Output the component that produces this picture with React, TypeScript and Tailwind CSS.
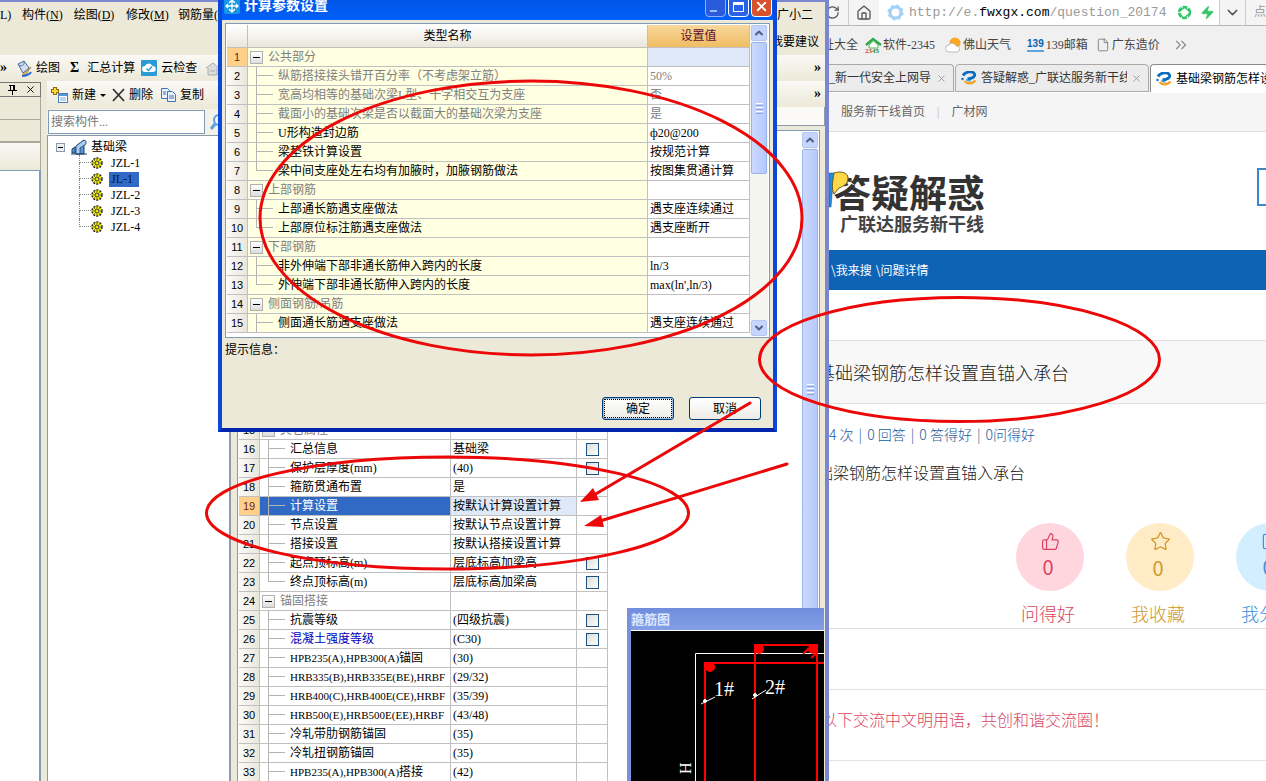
import { useState } from "react";
import { ChevronDown, ChevronUp, ChevronsRight, File, House, RotateCw, SquareArrowOutUpRight, Star, ThumbsUp, X, Zap } from "lucide-react";
import clsx from "clsx";

type Row = {
  no: number;
  name: string;
  code?: string;
  value?: string;
  kind: "group" | "item" | "last";
  muted?: boolean;
  check?: boolean;
  blue?: boolean;
};

const params: Row[] = [
  { no: 1, name: "公共部分", kind: "group" },
  { no: 2, name: "纵筋搭接接头错开百分率（不考虑架立筋）", value: "50%", kind: "item", muted: true },
  { no: 3, name: "宽高均相等的基础次梁L型、十字相交互为支座", value: "否", kind: "item", muted: true },
  { no: 4, name: "截面小的基础次梁是否以截面大的基础次梁为支座", value: "是", kind: "item", muted: true },
  { no: 5, name: "U形构造封边筋", value: "ф20@200", kind: "item" },
  { no: 6, name: "梁垫铁计算设置", value: "按规范计算", kind: "item" },
  { no: 7, name: "梁中间支座处左右均有加腋时，加腋钢筋做法", value: "按图集贯通计算", kind: "last" },
  { no: 8, name: "上部钢筋", kind: "group" },
  { no: 9, name: "上部通长筋遇支座做法", value: "遇支座连续通过", kind: "item" },
  { no: 10, name: "上部原位标注筋遇支座做法", value: "遇支座断开", kind: "last" },
  { no: 11, name: "下部钢筋", kind: "group" },
  { no: 12, name: "非外伸端下部非通长筋伸入跨内的长度", value: "ln/3", kind: "item" },
  { no: 13, name: "外伸端下部非通长筋伸入跨内的长度", value: "max(ln',ln/3)", kind: "last" },
  { no: 14, name: "侧面钢筋/吊筋", kind: "group" },
  { no: 15, name: "侧面通长筋遇支座做法", value: "遇支座连续通过", kind: "item" },
];

const props: Row[] = [
  { no: 15, name: "其它属性", kind: "group" },
  { no: 16, name: "汇总信息", value: "基础梁", kind: "item", check: true },
  { no: 17, name: "保护层厚度(mm)", value: "(40)", kind: "item", check: true },
  { no: 18, name: "箍筋贯通布置", value: "是", kind: "item" },
  { no: 19, name: "计算设置", value: "按默认计算设置计算", kind: "item" },
  { no: 20, name: "节点设置", value: "按默认节点设置计算", kind: "item" },
  { no: 21, name: "搭接设置", value: "按默认搭接设置计算", kind: "item" },
  { no: 22, name: "起点顶标高(m)", value: "层底标高加梁高", kind: "item", check: true },
  { no: 23, name: "终点顶标高(m)", value: "层底标高加梁高", kind: "last", check: true },
  { no: 24, name: "锚固搭接", kind: "group" },
  { no: 25, name: "抗震等级", value: "(四级抗震)", kind: "item", check: true },
  { no: 26, name: "混凝土强度等级", value: "(C30)", kind: "item", check: true, blue: true },
  { no: 27, code: "HPB235(A),HPB300(A)", name: "锚固", value: "(30)", kind: "item" },
  { no: 28, code: "HRB335(B),HRB335E(BE),HRBF", name: "", value: "(29/32)", kind: "item" },
  { no: 29, code: "HRB400(C),HRB400E(CE),HRBF", name: "", value: "(35/39)", kind: "item" },
  { no: 30, code: "HRB500(E),HRB500E(EE),HRBF", name: "", value: "(43/48)", kind: "item" },
  { no: 31, name: "冷轧带肋钢筋锚固", value: "(35)", kind: "item" },
  { no: 32, name: "冷轧扭钢筋锚固", value: "(35)", kind: "item" },
  { no: 33, code: "HPB235(A),HPB300(A)", name: "搭接", value: "(42)", kind: "item" },
];

const members = ["JZL-1", "JL-1", "JZL-2", "JZL-3", "JZL-4"];

function NameCell({ row }: { row: Row }) {
  if (row.kind === "group") {
    return (
      <div className="flex h-[18px] items-center overflow-hidden whitespace-nowrap text-[#808080]">
        <button aria-label={row.name} className="ml-0.5 mr-[5px] flex size-[13px] shrink-0 items-center justify-center border border-[#b0b0b0] bg-gradient-to-b from-white to-[#ddd]">
          <span className="h-px w-[7px] bg-black" />
        </button>
        {row.name}
      </div>
    );
  }
  return (
    <div className={clsx("flex h-[18px] items-center overflow-hidden whitespace-nowrap", row.muted && "text-[#808080]", row.blue && "text-[#0000c0]")}>
      <span className="-mt-px ml-2 mr-[5px] flex h-[19px] w-[17px] shrink-0 flex-col">
        <span className="h-[10px] border-b border-l border-[#b4b4b4]" />
        <span className={clsx("h-[9px]", row.kind === "item" && "border-l border-[#b4b4b4]")} />
      </span>
      {row.code && <span className="text-[11px]">{row.code}</span>}
      {row.name}
    </div>
  );
}

function NumCell({ no, active }: { no: number; active: boolean }) {
  return (
    <td
      className={clsx(
        "h-[19px] border-b border-r border-[#c0c0c0] p-0 text-center font-['Liberation_Sans',sans-serif] text-[11px] leading-4",
        active ? "bg-[#ffd08a] text-[#702010]" : "bg-gradient-to-r from-[#fbfaf6] to-[#e9e7dc]"
      )}
    >
      {no}
    </td>
  );
}

function ScrollButton({ down }: { down?: boolean }) {
  return (
    <button aria-label={down ? "向下" : "向上"} className="flex h-4 w-full shrink-0 items-center justify-center rounded-xs border border-[#b4c8f0] bg-[#c6d5fd] text-[#4d6185]">
      {down ? <ChevronDown size={12} strokeWidth={4} /> : <ChevronUp size={12} strokeWidth={4} />}
    </button>
  );
}

function Thumb({ className }: { className: string }) {
  return (
    <div className={clsx("flex flex-col items-center justify-center gap-px rounded-xs border border-[#98b4ec] bg-gradient-to-r from-[#cbd9ff] to-[#b6c9fb]", className)}>
      <span className="h-px w-[7px] bg-white" />
      <span className="h-px w-[7px] bg-[#8ca7e0]" />
      <span className="h-px w-[7px] bg-white" />
      <span className="h-px w-[7px] bg-[#8ca7e0]" />
      <span className="h-px w-[7px] bg-white" />
      <span className="h-px w-[7px] bg-[#8ca7e0]" />
    </div>
  );
}

function Gear() {
  return (
    <svg width="12" height="12" viewBox="0 0 12 12">
      <circle cx="6" cy="6" r="5" fill="#f4ee00" stroke="#222" strokeWidth="1.4" strokeDasharray="2 1.2" />
      <path d="M6 2v8M2 6h8M3.2 3.2l5.6 5.6M8.8 3.2L3.2 8.8" stroke="#444" strokeWidth=".8" />
      <circle cx="6" cy="6" r="1.6" fill="#ff3" stroke="#333" strokeWidth=".7" />
    </svg>
  );
}

function Swirl() {
  return (
    <svg width="16" height="14" viewBox="0 0 16 14" className="shrink-0" fill="none">
      <path d="M2 4.500C4 .5 12-.5 13.500 3c1 2.500-2 4.500-7 5" stroke="#0b6cc0" strokeWidth="2.800" />
      <path d="M3.500 10c3 3.500 8 3 11-.5" stroke="#f5a21d" strokeWidth="2.200" />
      <path d="M6 8c-1 1 1 2 4 2" stroke="#2f9be0" strokeWidth="1.200" />
      <circle cx="1.500" cy="8" r="1.200" fill="#0b6cc0" />
    </svg>
  );
}

function MemberPanel() {
  const [selected, setSelected] = useState("JL-1");
  return (
    <section className="flex w-[182px] shrink-0 flex-col">
      <div className="flex h-[28px] items-center bg-gradient-to-b from-[#faf9f5] to-[#ece9d8] pl-1">
        <button className="flex items-center gap-1">
          <svg width="17" height="16" viewBox="0 0 17 16">
            <path d="M4 0v8M0 4h8" stroke="#8a6a00" strokeWidth="4" />
            <path d="M4 1v6M1 4h6" stroke="#ffd83a" strokeWidth="2.200" />
            <rect x="7.500" y="6.500" width="9" height="9" fill="#fff" stroke="#4a7cc0" />
            <rect x="8" y="7" width="8" height="2" fill="#5c94dc" />
            <path d="M9 11h6M9 13h6" stroke="#7ba6dc" />
          </svg>
          新建
          <span className="border-x-3 border-t-3 border-x-transparent border-t-black" />
        </button>
        <button className="ml-1.5 flex items-center gap-1">
          <svg width="13" height="14" viewBox="0 0 13 14" fill="none" stroke="#333" strokeWidth="1.800">
            <path d="M1 1l11 12M12 1L1 13" />
          </svg>
          删除
        </button>
        <button className="ml-2 flex items-center gap-1">
          <svg width="15" height="14" viewBox="0 0 15 14" fill="#e8f1fc" stroke="#3e74b8">
            <path d="M.5.5h6l2 2v8h-8z" />
            <path d="M6.500 3.500h5l3 3v7h-8z" />
            <path d="M2 4h3M2 6h3M8 8h5M8 10h5" />
          </svg>
          复制
        </button>
      </div>
      <div className="flex h-[27px] items-center border-b border-[#8a98a8] bg-[#f3f1e8] pl-px">
        <input aria-label="搜索构件" placeholder="搜索构件..." className="h-6 w-[157px] border border-[#7f9db9] bg-white px-0.5 text-xs outline-none placeholder:text-[#777]" />
        <svg width="14" height="18" viewBox="0 0 14 18" fill="none" stroke="#5aa0e0" strokeWidth="2" className="ml-1">
          <circle cx="10" cy="7" r="5" />
          <path d="M6 11l-4 5" strokeWidth="3" />
        </svg>
      </div>
      <div className="flex-1 border-l border-[#8a98a8] bg-white pt-[3px]">
        <div className="flex h-4 items-center pl-2">
          <button aria-label="收起" className="flex size-[9px] items-center justify-center border border-[#8a9bb0] bg-[#eee]">
            <span className="h-px w-[5px] bg-black" />
          </button>
          <svg width="16" height="16" viewBox="0 0 16 16" className="ml-1.5 mr-1">
            <path d="M1 10l3-2v6H1zM5 7l8-6v14H5z" fill="#5f95cf" stroke="#1b416e" />
            <path d="M5 7l8-6 2 1v3L9 9v6H5z" fill="#a7cdf2" stroke="#1b416e" strokeWidth=".8" />
            <path d="M0 15h16" stroke="#1b416e" />
          </svg>
          <span>基础梁</span>
        </div>
        {members.map((m) => (
          <div key={m} className="flex h-4 items-center pl-[31px]">
            <span className={clsx("flex w-3 flex-col", m === "JZL-4" ? "mb-2 h-2" : "h-4")}>
              <span className="h-2 border-b border-l border-dotted border-[#888]" />
              {m !== "JZL-4" && <span className="h-2 border-l border-dotted border-[#888]" />}
            </span>
            <Gear />
            <button onClick={() => setSelected(m)} className={clsx("ml-1.5 h-[15px] px-0.5 leading-[15px]", selected === m && "bg-[#316ac5] pr-1.5 text-[#071540]")}>
              {m}
            </button>
          </div>
        ))}
      </div>
    </section>
  );
}

function PropertyPanel() {
  return (
    <section className="flex min-w-0 flex-1 flex-col border-l-2 border-[#8d9aa8] bg-[#ece9d8]">
      <div className="flex h-[26px] shrink-0 items-center justify-end bg-gradient-to-b from-[#faf9f5] to-[#ece9d8] pr-1">
        <span className="text-sm font-bold">»</span>
      </div>
      <div className="mb-1 h-[19px] shrink-0 border-b border-r border-[#8d9aa8] bg-[#fbfaf7]" />
      <div className="ml-[6px] mr-[5px] flex min-h-0 flex-1 justify-between border border-b-0 border-[#7f9db9] bg-white pl-px pr-px pt-px">
        <table className="w-[369px] table-fixed self-start border-separate border-spacing-0">
          <colgroup>
            <col className="w-[21px]" />
            <col />
            <col className="w-[126px]" />
            <col className="w-[31px]" />
          </colgroup>
          <tbody>
            <tr>
              <td colSpan={4} className="h-[289px] p-0" />
            </tr>
            {props.map((r) => (
              <tr key={r.no}>
                <NumCell no={r.no} active={r.no === 19} />
                <td className={clsx("border-b border-r border-[#c0c0c0] p-0", r.no === 19 && "bg-[#316ac5] text-white")}>
                  <NameCell row={r} />
                </td>
                <td className={clsx("border-b border-r border-[#c0c0c0] px-0.5 py-0 leading-4", r.no === 19 && "bg-[#dfe8f6]")}>{r.value}</td>
                <td className="border-b border-r border-[#c0c0c0] p-0">
                  {r.check && (
                    <input type="checkbox" aria-label={r.name} className="mx-auto block size-[13px] appearance-none border border-[#1c5180] bg-gradient-to-br from-[#dcdcd7] to-white" />
                  )}
                </td>
              </tr>
            ))}
          </tbody>
        </table>
        <div className="flex w-4 flex-col gap-px bg-[#f5f5f0]">
          <ScrollButton />
          <Thumb className="h-[480px]" />
        </div>
      </div>
    </section>
  );
}

function ParamDialog() {
  return (
    <div role="dialog" aria-label="计算参数设置" className="absolute left-[218px] top-0 flex h-[432px] w-[559px] flex-col border-x-4 border-b-4 border-[#0a48dc] border-b-[#0026b0] bg-[#ece9d8]">
      <div className="flex h-5 shrink-0 items-start bg-gradient-to-b from-[#0055e5] to-[#0060fa]">
        <svg width="16" height="16" viewBox="0 0 16 16" className="ml-0.5 -mt-0.5">
          <rect width="16" height="16" rx="2" fill="#1796e6" />
          <path d="M8 2v12M2 8h12M5 5l3-3 3 3M5 11l3 3 3-3M4 6L2 8l2 2M12 6l2 2-2 2" fill="none" stroke="#fff" strokeWidth="1.300" />
        </svg>
        <h2 className="-mt-1 ml-1 flex-1 text-sm font-bold leading-5 text-white">计算参数设置</h2>
        <button aria-label="最小化" className="-mt-1 flex h-[21px] w-[21px] items-end rounded-sm border border-[#8fb0ff] bg-[#2a5bdc] p-1">
          <span className="h-0.5 w-[7px] bg-[#9ab8ff]" />
        </button>
        <button aria-label="最大化" className="-mt-1 ml-0.5 flex h-[21px] w-[21px] items-center justify-center rounded-sm border border-white bg-[#2a62e6]">
          <span className="h-[10px] w-[11px] border border-t-3 border-white" />
        </button>
        <button aria-label="关闭" className="-mt-1 ml-0.5 mr-px flex h-[21px] w-[21px] items-center justify-center rounded-sm border border-white bg-[#d9512c] text-white">
          <X size={15} strokeWidth={3} />
        </button>
      </div>
      <div className="mx-[3px] mt-[3px] flex h-[315px] shrink-0 overflow-hidden border border-[#7f9db9] bg-white p-px">
        <table className="flex-1 table-fixed self-start border-separate border-spacing-0">
          <colgroup>
            <col className="w-[21px]" />
            <col />
            <col className="w-[102px]" />
          </colgroup>
          <thead>
            <tr>
              <th className="h-[23px] border-b border-r border-[#c0c0c0] bg-gradient-to-b from-white to-[#e9e7dc] p-0" />
              <th className="border-b border-r border-[#c0c0c0] bg-gradient-to-b from-white to-[#e9e7dc] p-0 font-normal">类型名称</th>
              <th className="border-b border-r border-[#c0c0c0] bg-gradient-to-b from-[#f8d79b] to-[#efbd62] p-0 font-normal text-[#601030]">设置值</th>
            </tr>
          </thead>
          <tbody>
            {params.map((r) => (
              <tr key={r.no}>
                <NumCell no={r.no} active={r.no === 1} />
                <td className="border-b border-r border-[#c0c0c0] bg-[#ffffe1] p-0">
                  <NameCell row={r} />
                </td>
                <td className={clsx("border-b border-r border-[#c0c0c0] px-0.5 py-0 leading-4", r.muted && "text-[#808080]", r.no === 1 && "bg-[#dfe8f6]")}>{r.value}</td>
              </tr>
            ))}
          </tbody>
        </table>
        <div className="flex w-[18px] flex-col gap-px bg-[#f5f5f0] px-px">
          <ScrollButton />
          <Thumb className="h-[132px]" />
          <div className="flex-1" />
          <ScrollButton down />
        </div>
      </div>
      <p className="mx-[3px] mt-1 flex-1 leading-4">提示信息：</p>
      <div className="mb-2 mr-3 flex justify-end gap-[15px]">
        <button className="h-[23px] w-[72px] rounded-[3px] border border-[#003c74] bg-gradient-to-b from-white to-[#ecebe5] p-px shadow-[inset_0_0_0_1px_#98b8ea]">
          <span className="flex h-full items-center justify-center border border-dotted border-black">确定</span>
        </button>
        <button className="h-[23px] w-[72px] rounded-[3px] border border-[#003c74] bg-gradient-to-b from-white to-[#ecebe5]">取消</button>
      </div>
    </div>
  );
}

function StirrupWindow() {
  return (
    <div className="absolute bottom-0 left-[627px] right-[5px] top-[608px] flex flex-col border-l-4 border-[#7a90dc]">
      <h2 className="h-[22px] bg-gradient-to-b from-[#6f8ddc] to-[#829fe6] text-[13px] font-bold leading-6 text-[#dce7ff]">箍筋图</h2>
      <svg className="w-full flex-1 border-t border-white bg-black" viewBox="0 0 193 150" preserveAspectRatio="xMinYMin slice" fill="none">
        <path d="M64.500 150V22.500H194" stroke="#fff" />
        <g stroke="#f00" strokeWidth="2">
          <path d="M74 150V32H194M124 150V14H186V150" />
          <path d="M172 23l5-5 5 3M180 27l6-5" />
        </g>
        <g fill="#f00">
          <circle cx="79" cy="36" r="5" />
          <circle cx="128" cy="18" r="5" />
          <circle cx="182" cy="18" r="5" />
        </g>
        <g stroke="#fff">
          <path d="M70 73l14-7M121 68l14-9" />
          <circle cx="74" cy="70" r="1.500" fill="#fff" />
          <circle cx="124" cy="64" r="1.500" fill="#fff" />
        </g>
        <g fill="#fff" className="font-['Liberation_Serif',serif] text-xl">
          <text x="83" y="65">1#</text>
          <text x="134" y="63">2#</text>
          <text x="60" y="143" fontSize="16" transform="rotate(-90 60 143)">H</text>
        </g>
      </svg>
    </div>
  );
}

function DesktopApp() {
  return (
    <div className="relative flex w-[829px] shrink-0 flex-col border-r-4 border-t-2 border-[#7a86d0] bg-[#ece9d8]">
      <nav className="flex h-[26px] shrink-0 items-center gap-[11px] whitespace-nowrap">
        <button className="w-[11px]">L)</button>
        <button className="w-10">构件(<u>N</u>)</button>
        <button className="w-[42px]">绘图(<u>D</u>)</button>
        <button className="w-[41px]">修改(<u>M</u>)</button>
        <button>钢筋量(<u>Q</u>)</button>
        <button className="ml-auto mr-3">广小二</button>
      </nav>
      <div className="flex h-[27px] shrink-0 items-center justify-end bg-[#ece9d8] pr-1.5">
        <button>我要建议</button>
      </div>
      <div className="flex h-[26px] shrink-0 items-center bg-gradient-to-b from-[#faf9f5] to-[#ece9d8]">
        <span className="w-4 text-sm font-bold leading-4">»</span>
        <button className="flex items-center gap-1">
          <svg width="16" height="17" viewBox="0 0 16 17">
            <path d="M2 4l6-3 5 7-6 5z" fill="#cfe0f4" stroke="#4d6d96" />
            <path d="M3 5c2 2 6 0 5-3" fill="none" stroke="#4d6d96" />
            <path d="M15 7l-5 7-3 2c-1-2 1-3 2-4z" fill="#f2c15a" stroke="#8b6a2a" strokeWidth=".7" />
            <path d="M6 16c4 0 8-2 9-4" fill="none" stroke="#2f6fd0" strokeWidth="2" />
          </svg>
          绘图
        </button>
        <button className="ml-[10px] flex items-center gap-2">
          <b className="text-sm leading-4">Σ</b>
          汇总计算
        </button>
        <button className="ml-1.5 flex items-center gap-1">
          <svg width="16" height="16" viewBox="0 0 16 16">
            <rect width="16" height="16" rx="1" fill="#2b9bd8" />
            <path d="M4 12a3 3 0 0 1 0-6 4 4 0 0 1 7.500 0A3 3 0 0 1 12 12z" fill="#fff" />
            <path d="M5.500 8.500l2 2 3.500-4" fill="none" stroke="#2b9bd8" strokeWidth="1.400" />
          </svg>
          云检查
        </button>
        <svg width="15" height="15" viewBox="0 0 15 15" className="ml-2" fill="#ddd" stroke="#aaa">
          <path d="M1 7l7-5 6 5M3 7v7h9V7M5 10h5" />
        </svg>
        <span className="ml-auto pr-1 text-sm font-bold">»</span>
      </div>
      <div className="flex min-h-0 flex-1">
        <aside className="mr-1.5 flex w-[41px] shrink-0 flex-col">
          <div className="mt-px flex h-[15px] items-center justify-end gap-2 border border-l-0 border-[#777]">
            <svg width="9" height="10" viewBox="0 0 9 10" fill="none" stroke="#000">
              <path d="M2.500 0v5M1 .5h6M0 5.500h9M4.500 6v4" />
              <path d="M6 0v5" strokeWidth="2" />
            </svg>
            <X size={11} strokeWidth={2} className="mr-1" />
          </div>
          <div className="h-[23px] border-b border-r border-[#aca899]" />
          <div className="h-[23px] border-b-2 border-r border-[#aca899]" />
          <div className="h-[27px] border-r border-[#aca899] bg-gradient-to-b from-[#faf9f5] to-[#ece9d8]" />
          <div className="flex-1 border-r-2 border-t border-[#7f9db9] bg-white" />
        </aside>
        <MemberPanel />
        <PropertyPanel />
      </div>
    </div>
  );
}

function Browser() {
  return (
    <div className="flex min-w-0 flex-1 flex-col overflow-hidden whitespace-nowrap bg-white">
      <div className="flex h-[26px] shrink-0 items-center border-b border-[#b8b8b8] bg-[#f4f4f4] text-[#555]">
        <RotateCw size={15} className="-ml-1 shrink-0" />
        <span className="ml-2 h-full border-l border-[#ccc]" />
        <House size={16} className="mx-[7px] shrink-0" />
        <div className="flex h-full items-center gap-1 bg-white pl-2">
          <svg width="17" height="17" viewBox="0 0 17 17" className="mr-px">
            <circle cx="8.500" cy="8.500" r="5.500" fill="none" stroke="#9fd0f6" strokeWidth="3" />
            <circle cx="8.500" cy="8.500" r="7.500" fill="none" stroke="#8cc4f2" strokeDasharray="3 3" />
          </svg>
          <a href="#url" className="w-[264px] font-['Liberation_Mono',monospace] text-[13px] text-[#999]">
            http://e.<span className="text-black">fwxgx.com</span>/question_20174
          </a>
          <svg width="15" height="15" viewBox="0 0 15 15" fill="none" stroke="#35c46a" strokeWidth="2.400">
            <circle cx="7.500" cy="7.500" r="5.500" strokeDasharray="4.800 1" />
            <path d="M7 2l5 4M13 8l-5 4M6 13L3 8M3 6l4-3" strokeWidth="1.200" />
          </svg>
          <Zap size={15} fill="#35c46a" stroke="#35c46a" strokeWidth={1} className="mx-1" />
        </div>
        <span className="h-full border-l border-[#ccc]" />
        <ChevronDown size={17} className="mx-1 shrink-0" />
        <span className="h-full border-l border-[#ccc] pl-2 leading-6 text-[#999]">点击</span>
      </div>
      <div className="flex h-[38px] shrink-0 items-center bg-[#f0f0f0] text-[#444]">
        <a href="#all" className="-ml-[7px]">址大全</a>
        <a href="#2345" className="ml-[7px] flex items-center gap-px">
          <svg width="17" height="16" viewBox="0 0 17 16">
            <path d="M1 8l7-6 8 6" fill="none" stroke="#2fa84a" strokeWidth="2.500" />
            <path d="M4 8l4.500-4L13 8v3H4z" fill="#fff" stroke="#58b85a" />
            <text x="0" y="16" fontSize="7" fontWeight="bold" fill="#d33">23<tspan fill="#2b8a3e">45</tspan></text>
          </svg>
          软件-2345
        </a>
        <a href="#weather" className="ml-2.5 flex items-center gap-px">
          <svg width="17" height="16" viewBox="0 0 17 16">
            <circle cx="10" cy="6" r="5.500" fill="#f9a825" />
            <path d="M4 15a3.500 3.500 0 0 1 0-7 4 4 0 0 1 7 1 3 3 0 0 1 1 6z" fill="#fff" stroke="#bbb" />
          </svg>
          佛山天气
        </a>
        <a href="#139" className="ml-4 flex items-center gap-0.5">
          <b className="border-b-2 border-[#5aa7e0] font-['Liberation_Sans',sans-serif] text-[10px] leading-3 text-[#0a62b0]">139</b>
          139邮箱
        </a>
        <a href="#gd" className="ml-2 flex items-center gap-0.5">
          <File size={14} strokeWidth={1.5} className="text-[#777]" />
          广东造价
        </a>
        <ChevronsRight size={18} strokeWidth={1.5} className="ml-3 shrink-0 text-[#888]" />
      </div>
      <div className="flex h-[28px] shrink-0 items-stretch gap-px bg-[#f0f0f0] text-[#333]">
        <div className="flex w-[125px] shrink-0 items-center justify-between rounded-tr border-b border-r border-t border-[#aaa] bg-[#ececec] pr-1.5">
          <span className="w-[102px] overflow-hidden">_新一代安全上网导</span>
          <X size={11} className="text-[#999]" />
        </div>
        <div className="flex w-[194px] shrink-0 items-center rounded-t border border-[#aaa] bg-[#ececec] pl-[5px] pr-1.5">
          <Swirl />
          <span className="ml-1 flex-1 overflow-hidden">答疑解惑_广联达服务新干线</span>
          <X size={11} className="ml-1 shrink-0 text-[#999]" />
        </div>
        <div className="flex flex-1 items-center overflow-hidden rounded-tl border-l border-t border-[#8a8a8a] bg-white pl-[5px] text-black">
          <Swirl />
          <span className="ml-1">基础梁钢筋怎样设置直锚入承台</span>
        </div>
      </div>
      <div className="mt-px flex h-[39px] shrink-0 items-center gap-3 border-b border-[#e0e0e0] bg-[#f5f5f5] pl-3 text-[#666]">
        <a href="#home">服务新干线首页</a>
        <span className="text-[#bbb]">|</span>
        <a href="#gcw">广材网</a>
      </div>
      <header className="flex h-[118px] shrink-0 items-center justify-between">
        <div className="relative pl-1 pt-6 font-['Noto_Sans_CJK_SC',sans-serif] font-bold">
          <svg width="22" height="42" viewBox="0 0 22 42" className="absolute left-0 top-5">
            <path d="M0 6h5L2 40H0z" fill="#1c8fe0" stroke="#345" strokeWidth=".5" />
            <path d="M5 6c6-2 14-1 14 5s-4 8-9 10l-5 6c-3-6-1-14 0-21z" fill="#ffd84a" stroke="#6b5a20" />
          </svg>
          <h1 className="text-[38px] leading-10 text-[#333]">答疑解惑</h1>
          <p className="pl-[7px] text-lg leading-6 text-[#444]">广联达服务新干线</p>
        </div>
        <span className="mb-2 h-[38px] w-[9px] border-2 border-r-0 border-[#3a87cc]" />
      </header>
      <nav className="flex h-10 shrink-0 items-center gap-1 bg-[#0f63b5] pl-0.5 font-['Noto_Sans_CJK_SC',sans-serif] text-white">
        <a href="#search">\我来搜</a>
        <a href="#detail">\问题详情</a>
      </nav>
      <main className="flex-1 font-['Noto_Sans_CJK_SC',sans-serif] font-light">
        <div className="mt-[50px] h-16 border-y border-[#e2e2e2] bg-[#f8f8f8]">
          <h2 className="-ml-3 text-lg leading-[62px] text-[#222]">基础梁钢筋怎样设置直锚入承台</h2>
        </div>
        <p className="mt-[18px] flex gap-[5px] text-sm leading-6 text-[#1b5a9c]">
          <span>4 次</span>
          <span>|</span>
          <span>0 回答</span>
          <span>|</span>
          <span>0 答得好</span>
          <span>|</span>
          <span>0问得好</span>
        </p>
        <p className="-ml-7 mt-3.5 text-base leading-6 text-[#222]">基础梁钢筋怎样设置直锚入承台</p>
        <div className="flex gap-[42px] border-b border-[#ddd] pb-px pl-[187px] pt-[39px] text-lg">
          <button className="flex w-[68px] shrink-0 flex-col items-center text-[#d9455f]">
            <span className="flex size-[68px] flex-col items-center rounded-full bg-[#ffd6de] pt-[9px]">
              <ThumbsUp size={19} strokeWidth={1.5} />
              <span className="mt-1 pr-1 text-xl font-normal leading-6">0</span>
            </span>
            <span className="mt-2 pr-1 leading-7">问得好</span>
          </button>
          <button className="flex w-[68px] shrink-0 flex-col items-center text-[#cf9a2c]">
            <span className="flex size-[68px] flex-col items-center rounded-full bg-[#ffebc6] pt-2">
              <Star size={21} strokeWidth={1.5} />
              <span className="mt-1 pr-1 text-xl font-normal leading-6">0</span>
            </span>
            <span className="mt-2 pr-1 leading-7">我收藏</span>
          </button>
          <button className="flex w-[68px] shrink-0 flex-col items-center text-[#3c8fdc]">
            <span className="flex size-[68px] flex-col items-center rounded-full bg-[#d3efff] pt-[9px]">
              <SquareArrowOutUpRight size={19} strokeWidth={1.5} />
              <span className="mt-1 pr-1 text-xl font-normal leading-6">0</span>
            </span>
            <span className="mt-2 pr-1 leading-7">我分享</span>
          </button>
        </div>
        <div className="h-[61px] border-b border-[#e2e2e2]" />
        <p className="-ml-2 h-[71px] border-b border-[#e2e2e2] pt-[17px] text-base leading-6 text-[#d9455f]">以下交流中文明用语，共创和谐交流圈！</p>
      </main>
    </div>
  );
}

function Marks() {
  return (
    <svg className="pointer-events-none absolute left-0 top-0" width="1266" height="781" viewBox="0 0 1266 781" fill="none" stroke="#ec0808" strokeWidth="3" strokeLinecap="round">
      <ellipse cx="531" cy="218" rx="271" ry="137" />
      <ellipse cx="447.500" cy="513" rx="241" ry="56" />
      <ellipse cx="959.500" cy="359.500" rx="200" ry="62" />
      <path d="M750 403L594 495M787 464L600 521" />
      <path d="M580 502l13-14 6 12zM584 526l17-11 3 12z" fill="#ec0808" stroke="none" />
    </svg>
  );
}

export default function App() {
  return (
    <div className="relative flex h-screen w-full overflow-hidden font-['Liberation_Serif','Noto_Sans_CJK_SC',serif] text-xs text-black">
      <DesktopApp />
      <Browser />
      <div className="pointer-events-none absolute inset-y-0 left-0 w-[829px] *:pointer-events-auto">
        <ParamDialog />
        <StirrupWindow />
      </div>
      <Marks />
    </div>
  );
}
